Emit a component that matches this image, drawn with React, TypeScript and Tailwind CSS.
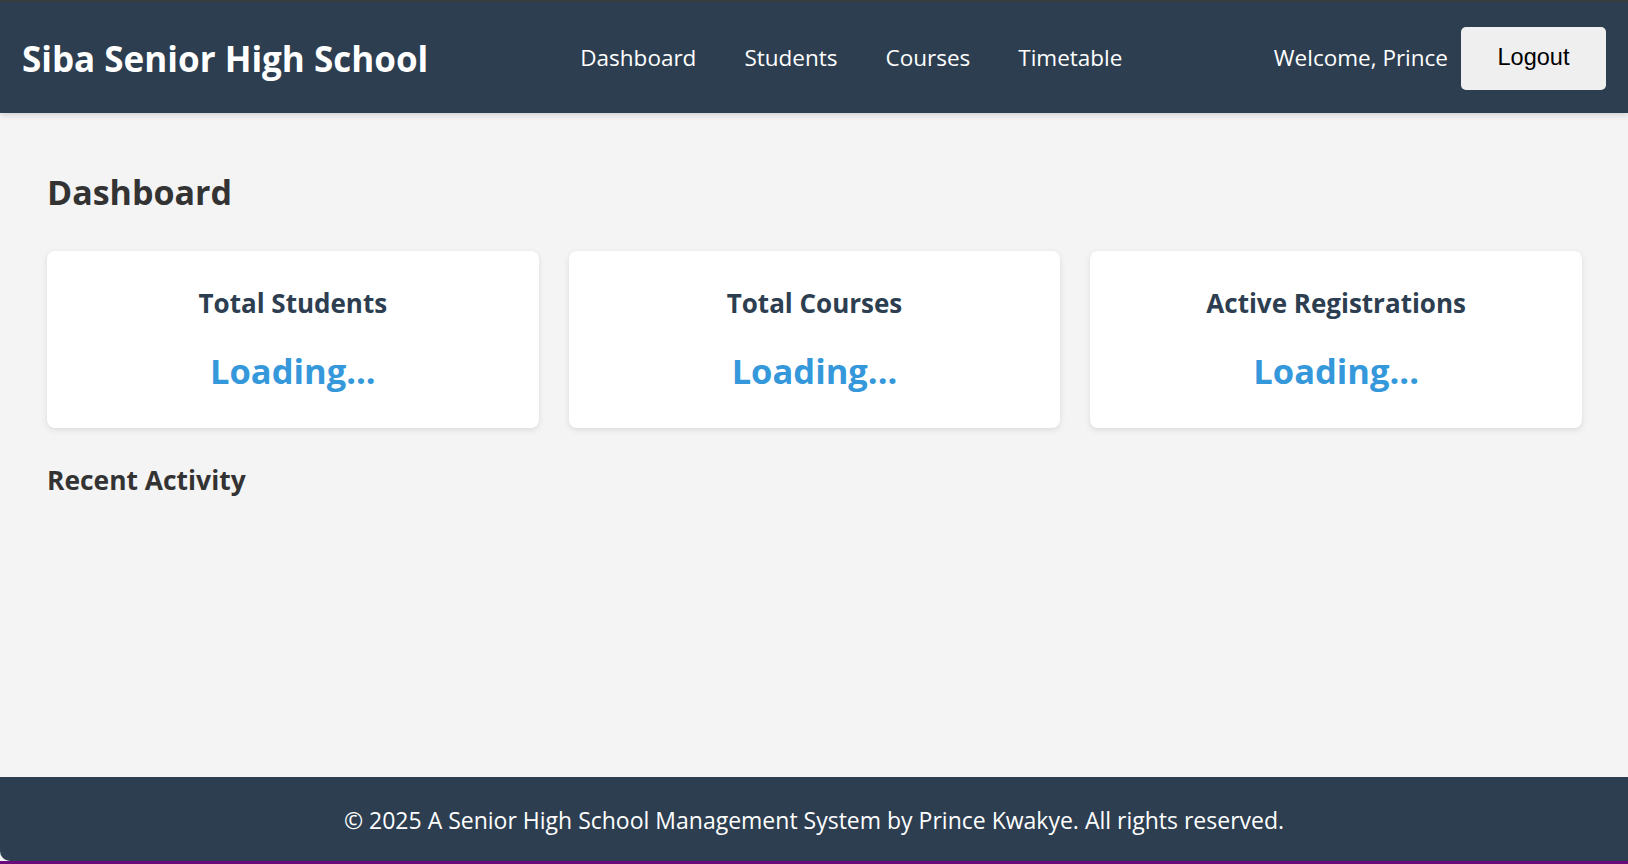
import React from 'react';

const stats = [
  { label: 'Total Students', value: 'Loading...' },
  { label: 'Total Courses', value: 'Loading...' },
  { label: 'Active Registrations', value: 'Loading...' },
];

const navLinks = ['Dashboard', 'Students', 'Courses', 'Timetable'];

const App: React.FC = () => {
  return (
    <div className="flex h-screen flex-col bg-[#f4f4f4] font-['Open_Sans',sans-serif]">
      <div className="h-[2px] bg-[#3a3d40]" />

      {/* Header */}
      <header className="relative z-10 flex h-[111px] items-center bg-[#2c3e50] pl-[22px] pr-[22px] pt-[2px] shadow-[0_2px_6px_rgba(0,0,0,0.15)]">
        <h1 className="text-[35px] font-bold leading-tight text-white">Siba Senior High School</h1>
        <nav className="ml-[152px] flex gap-[48px] text-[22.5px] text-white">
          {navLinks.map((link) => (
            <a key={link} href="#" className="leading-tight">{link}</a>
          ))}
        </nav>
        <div className="ml-auto flex items-center gap-[13px]">
          <span className="text-[22.5px] leading-tight text-white">Welcome, Prince</span>
          <button className="-mt-[1px] h-[63px] w-[145px] rounded-[5px] bg-[#efefef] font-['Liberation_Sans',Arial,sans-serif] text-[23.5px] text-black">
            Logout
          </button>
        </div>
      </header>

      {/* Main */}
      <main className="flex-1 pl-[47px] pr-[46px] pt-[59px]">
        <h2 className="text-[34px] font-bold leading-[1.2] text-[#333]">Dashboard</h2>

        <div className="mt-[38px] grid grid-cols-3 gap-[30px]">
          {stats.map((s) => (
            <div key={s.label} className="flex h-[177px] flex-col items-center rounded-[8px] bg-white pt-[37px] shadow-[0_2px_6px_rgba(0,0,0,0.1)]">
              <h3 className="text-[26px] font-bold leading-[1.2] text-[#2c3e50]">{s.label}</h3>
              <p className="mt-[31px] text-[34.5px] font-bold leading-[1.2] text-[#3498db]">{s.value}</p>
            </div>
          ))}
        </div>

        <h3 className="mt-[37px] text-[26.4px] font-bold leading-[1.2] text-[#333]">Recent Activity</h3>
      </main>

      {/* Footer */}
      <footer className="flex h-[84px] items-center justify-center rounded-bl-[10px] bg-[#2c3e50] pt-[3px]">
        <p className="text-[23px] text-white">
          © 2025 A Senior High School Management System by Prince Kwakye. All rights reserved.
        </p>
      </footer>
      <div className="h-[3px] bg-[#6b0a7a]" />
    </div>
  );
};

export default App;
